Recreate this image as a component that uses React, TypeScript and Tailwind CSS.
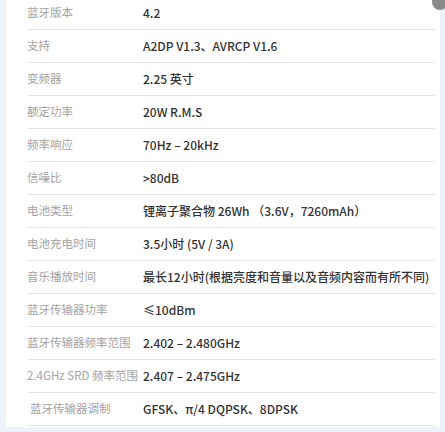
const rows: [string, string][] = [
  ['蓝牙版本', '4.2'],
  ['支持', 'A2DP V1.3、AVRCP V1.6'],
  ['变频器', '2.25 英寸'],
  ['额定功率', '20W R.M.S'],
  ['频率响应', '70Hz – 20kHz'],
  ['信噪比', '>80dB'],
  ['电池类型', '锂离子聚合物 26Wh （3.6V，7260mAh）'],
  ['电池充电时间', '3.5小时 (5V / 3A)'],
  ['音乐播放时间', '最长12小时(根据亮度和音量以及音频内容而有所不同)'],
  ['蓝牙传输器功率', '≤10dBm'],
  ['蓝牙传输器频率范围', '2.402 – 2.480GHz'],
  ['2.4GHz SRD 频率范围', '2.407 – 2.475GHz'],
  ['蓝牙传输器调制', 'GFSK、π/4 DQPSK、8DPSK'],
]

export default function App() {
  return (
    <div
      className="relative h-[432px] w-[445px] overflow-hidden bg-[#edf2fa] pt-[2px]"
      style={{ fontFamily: '"Noto Sans CJK SC", "Noto Sans", sans-serif' }}
    >
      {/* 规格表 */}
      <div className="ml-[6px] mr-[5px] h-full bg-white pl-[21px] pr-[5px]">
        <div className="-mt-[5px]">
          {rows.map(([label, value], i) => (
            <div
              key={label}
              className="flex h-[33px] items-center border-b-[1.5px] border-[#e6e6e6]"
            >
              <div
                className={
                  i === 12
                    ? 'w-[116px] shrink-0 pl-[3px] text-[11.5px] text-[#a3a3a3]'
                    : 'w-[116px] shrink-0 whitespace-nowrap text-[11.5px] text-[#a3a3a3]'
                }
              >
                {label}
              </div>
              <div className="whitespace-nowrap text-[12px] font-medium text-[#333]">{value}</div>
            </div>
          ))}
        </div>
      </div>
      {/* 关闭按钮 */}
      <div className="absolute -right-[3px] -top-[6px] h-[16px] w-[16px] rounded-full bg-[#8a8a8a]" />
    </div>
  )
}
